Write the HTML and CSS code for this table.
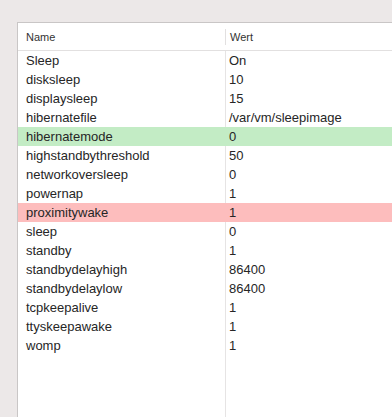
FILE: index.html
```html
<!DOCTYPE html>
<html lang="de">
<head>
    <meta charset="UTF-8">
    <title>pmset</title>
    <link rel="stylesheet" href="styles.css">
</head>
<body>
    <div class="table">
        <div class="head">
            <div class="col-name">Name</div>
            <div class="col-value">Wert</div>
        </div>
        <div class="rows">
            <div class="row"><div class="col-name">Sleep</div><div class="col-value">On</div></div>
            <div class="row"><div class="col-name">disksleep</div><div class="col-value">10</div></div>
            <div class="row"><div class="col-name">displaysleep</div><div class="col-value">15</div></div>
            <div class="row"><div class="col-name">hibernatefile</div><div class="col-value">/var/vm/sleepimage</div></div>
            <div class="row added"><div class="col-name">hibernatemode</div><div class="col-value">0</div></div>
            <div class="row"><div class="col-name">highstandbythreshold</div><div class="col-value">50</div></div>
            <div class="row"><div class="col-name">networkoversleep</div><div class="col-value">0</div></div>
            <div class="row"><div class="col-name">powernap</div><div class="col-value">1</div></div>
            <div class="row removed"><div class="col-name">proximitywake</div><div class="col-value">1</div></div>
            <div class="row"><div class="col-name">sleep</div><div class="col-value">0</div></div>
            <div class="row"><div class="col-name">standby</div><div class="col-value">1</div></div>
            <div class="row"><div class="col-name">standbydelayhigh</div><div class="col-value">86400</div></div>
            <div class="row"><div class="col-name">standbydelaylow</div><div class="col-value">86400</div></div>
            <div class="row"><div class="col-name">tcpkeepalive</div><div class="col-value">1</div></div>
            <div class="row"><div class="col-name">ttyskeepawake</div><div class="col-value">1</div></div>
            <div class="row"><div class="col-name">womp</div><div class="col-value">1</div></div>
        </div>
    </div>
</body>
</html>
```

FILE: styles.css
```css
* {
    margin: 0;
    padding: 0;
    box-sizing: border-box;
}

html, body {
    height: 100%;
}

body {
    background: #ece8e8;
    padding: 22px 0 0 17px;
    font-family: 'Liberation Sans', Arial, sans-serif;
    color: #262626;
    overflow: hidden;
}

.table {
    height: 100%;
    background: #fff;
    border-top: 1px solid #c9c6c6;
    border-left: 1px solid #c9c6c6;
    display: flex;
    flex-direction: column;
}

.head {
    height: 28px;
    display: flex;
    align-items: center;
    border-bottom: 1px solid #e2e0e0;
    font-size: 11px;
    color: #333;
}

.head .col-value {
    border-left: 1px solid #e2e0e0;
    height: 16px;
    line-height: 16px;
}

.rows {
    flex: 1;
    background: linear-gradient(to right, transparent 207px, #e6e4e4 207px, #e6e4e4 208px, transparent 208px);
}

.row {
    height: 19px;
    display: flex;
    align-items: center;
    font-size: 13px;
}

.col-name {
    width: 207px;
    padding-left: 8px;
}

.col-value {
    padding-left: 4px;
}

.row.added {
    background: #c3ecc5;
}

.row.removed {
    background: #fdbdbd;
}
```
